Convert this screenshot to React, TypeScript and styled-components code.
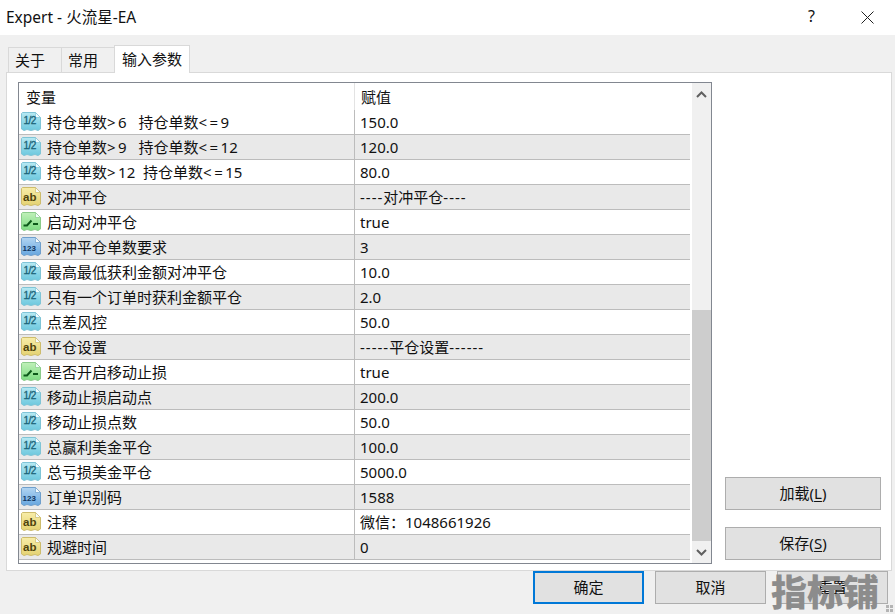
import { createGlobalStyle, styled } from "styled-components";

const GlobalStyle = createGlobalStyle`
  html, body {
    margin: 0;
    padding: 0;
    background: #f0f0f0;
    overflow: hidden;
  }
  * {
    box-sizing: border-box;
  }
`;

const Dialog = styled.div`
  position: relative;
  display: flex;
  flex-direction: column;
  width: 895px;
  height: 614px;
  background: #f0f0f0;
  color: #111;
  font-family: "Noto Sans", "Noto Sans CJK SC", sans-serif;
  font-size: 15px;
  overflow: hidden;
`;

const TitleBar = styled.div`
  display: flex;
  align-items: center;
  height: 35px;
  padding: 0 21px 0 6px;
  background: #fff;
  font-size: 15.5px;
`;

const Title = styled.div`
  flex: 1;
  margin-top: -3px;
`;

const HelpMark = styled.div`
  width: 53px;
  font-size: 16px;
  margin-top: -4px;
`;

const TabRow = styled.div`
  display: flex;
  align-items: flex-end;
  height: 37px;
  padding-left: 8px;
`;

const Tab = styled.div<{ $active?: boolean }>`
  display: flex;
  align-items: center;
  height: ${(p) => (p.$active ? 28 : 25)}px;
  width: ${(p) => (p.$active ? 76 : 54)}px;
  padding: 0 0 2px ${(p) => (p.$active ? 7 : 6)}px;
  background: ${(p) => (p.$active ? "#fff" : "#f0f0f0")};
  border: 1px solid #d9d9d9;
  border-bottom: none;
  margin-right: -1px;
  margin-bottom: ${(p) => (p.$active ? -1 : 0)}px;
  z-index: ${(p) => (p.$active ? 2 : 1)};
  position: relative;
`;

const Panel = styled.div`
  display: flex;
  margin-left: 6px;
  width: 886px;
  height: 499px;
  padding: 9px 9px 7px 11px;
  background: #fff;
  border: 1px solid #d9d9d9;
`;

const List = styled.div`
  display: flex;
  width: 694px;
  height: 482px;
  border: 1px solid #828790;
`;

const Grid = styled.div`
  flex: 1;
  min-width: 0;
  background: #fff;
`;

const HeaderRow = styled.div`
  display: grid;
  grid-template-columns: 336px 1fr;
  height: 27px;
  align-items: center;
`;

const HeaderCell = styled.div<{ $divided?: boolean }>`
  height: 100%;
  display: flex;
  align-items: center;
  padding-left: ${(p) => (p.$divided ? 7 : 6)}px;
  border-right: ${(p) => (p.$divided ? "1px solid #e3e3e3" : "none")};
`;

const Row = styled.div<{ $shaded: boolean }>`
  display: grid;
  grid-template-columns: 336px 1fr;
  height: 25px;
  background: ${(p) => (p.$shaded ? "#e9e9e9" : "#fff")};
  border-bottom: 1px solid #bcbcbc;
`;

const NameCell = styled.div`
  display: flex;
  align-items: center;
  gap: 5px;
  padding-left: 1px;
  border-right: 1px solid #bcbcbc;
  white-space: pre;
`;

const NameText = styled.span`
  margin-top: -2px;
`;

// signs and dashes are set wider than the font draws them
const Sign = styled.span<{ $spacing: number }>`
  letter-spacing: ${(p) => p.$spacing}px;
`;

const ValueCell = styled.div`
  display: flex;
  align-items: center;
  padding: 0 0 1px 5px;
  white-space: pre;
`;

const ScrollBar = styled.div`
  display: flex;
  flex-direction: column;
  width: 21px;
  background: #f0f0f0;
  border-left: 2px solid #fff;
`;

const ScrollArrow = styled.div`
  display: flex;
  align-items: center;
  justify-content: center;
  height: 22px;
`;

const ScrollSpace = styled.div`
  height: 205px;
`;

const ScrollThumb = styled.div`
  flex: 1;
  background: #cdcdcd;
`;

const SideColumn = styled.div`
  display: flex;
  flex-direction: column;
  justify-content: flex-end;
  gap: 17px;
  margin-left: 13px;
  padding-bottom: 3px;
`;

const Button = styled.div<{ $wide?: boolean; $primary?: boolean }>`
  display: flex;
  align-items: center;
  justify-content: center;
  width: ${(p) => (p.$wide ? 156 : 111)}px;
  height: 33px;
  padding-bottom: 2px;
  background: #e1e1e1;
  border: ${(p) => (p.$primary ? "2px solid #0078d7" : "1px solid #adadad")};
  white-space: pre;
`;

const Underlined = styled.span`
  text-decoration: underline;
  text-underline-offset: 2px;
  text-decoration-thickness: 1px;
`;

const Footer = styled.div`
  display: flex;
  justify-content: flex-end;
  gap: 11px;
  padding-right: 7px;
`;

const Watermark = styled.div`
  position: absolute;
  left: 771px;
  top: 566px;
  font-family: "Noto Sans CJK SC", sans-serif;
  font-size: 36px;
  font-weight: 900;
  line-height: 48px;
  color: #8c8c8c;
  white-space: nowrap;
`;

const Grip = styled.svg`
  position: absolute;
  right: 2px;
  bottom: 2px;
`;

type Kind = "half" | "text" | "bool" | "num";

const iconColors: Record<Kind, { top: string; bottom: string; edge: string; ink: string }> = {
  half: { top: "#b6e9f3", bottom: "#6cc8de", edge: "#7fc4d6", ink: "#1b6478" },
  text: { top: "#f8eda8", bottom: "#e4d272", edge: "#cdbc6c", ink: "#4d430d" },
  bool: { top: "#bff0b8", bottom: "#7cdc82", edge: "#8acb8a", ink: "#0d5a1a" },
  num: { top: "#b2d5f2", bottom: "#66a6df", edge: "#6f9fcc", ink: "#10365e" },
};

function ParamIcon({ kind }: { kind: Kind }) {
  const c = iconColors[kind];
  const id = `icon-${kind}`;
  return (
    <svg width="22" height="22" viewBox="0 0 22 22">
      <defs>
        <linearGradient id={id} x1="0" y1="0" x2="0" y2="1">
          <stop offset="0" stopColor={c.top} />
          <stop offset="1" stopColor={c.bottom} />
        </linearGradient>
      </defs>
      <path
        d="M2.5 1.5H15.5L20.5 6.5V18L18 19.5L15 18.5L11 19.5L7 18.5L4 19.5L1.5 18V2.5Z"
        fill={`url(#${id})`}
        stroke={c.edge}
      />
      <path d="M15.5 1.5V6.5H20.5Z" fill="#f4fbfd" stroke={c.edge} strokeWidth="0.7" />
      {kind === "half" && (
        <text x="3.5" y="13" fontSize="10" fontFamily="Liberation Sans" fill={c.ink} stroke={c.ink} strokeWidth="0.3" letterSpacing="-0.6">
          1/2
        </text>
      )}
      {kind === "text" && (
        <text x="3" y="14.5" fontSize="11.5" fontWeight="700" fontFamily="Liberation Sans" fill={c.ink}>
          ab
        </text>
      )}
      {kind === "num" && (
        <text x="2.5" y="14.5" fontSize="8" fontWeight="700" fontFamily="Liberation Sans" fill={c.ink}>
          123
        </text>
      )}
      {kind === "bool" && (
        <path d="M3.5 14.5H7L11.5 9.5M13 13H18" fill="none" stroke={c.ink} strokeWidth="2" />
      )}
    </svg>
  );
}

function Spaced({ text, match, spacing }: { text: string; match: RegExp; spacing: number }) {
  return (
    <>
      {text.split(match).map((part, i) =>
        i % 2 === 1 ? (
          <Sign key={i} $spacing={spacing}>
            {part}
          </Sign>
        ) : (
          part
        )
      )}
    </>
  );
}

const params: { kind: Kind; name: string; value: string }[] = [
  { kind: "half", name: "持仓单数>6   持仓单数<=9", value: "150.0" },
  { kind: "half", name: "持仓单数>9   持仓单数<=12", value: "120.0" },
  { kind: "half", name: "持仓单数>12  持仓单数<=15", value: "80.0" },
  { kind: "text", name: "对冲平仓", value: "----对冲平仓----" },
  { kind: "bool", name: "启动对冲平仓", value: "true" },
  { kind: "num", name: "对冲平仓单数要求", value: "3" },
  { kind: "half", name: "最高最低获利金额对冲平仓", value: "10.0" },
  { kind: "half", name: "只有一个订单时获利金额平仓", value: "2.0" },
  { kind: "half", name: "点差风控", value: "50.0" },
  { kind: "text", name: "平仓设置", value: "-----平仓设置------" },
  { kind: "bool", name: "是否开启移动止损", value: "true" },
  { kind: "half", name: "移动止损启动点", value: "200.0" },
  { kind: "half", name: "移动止损点数", value: "50.0" },
  { kind: "half", name: "总赢利美金平仓", value: "100.0" },
  { kind: "half", name: "总亏损美金平仓", value: "5000.0" },
  { kind: "num", name: "订单识别码", value: "1588" },
  { kind: "text", name: "注释", value: "微信：1048661926" },
  { kind: "text", name: "规避时间", value: "0" },
];

export default function App() {
  return (
    <Dialog>
      <GlobalStyle />
      <TitleBar>
        <Title>Expert - 火流星-EA</Title>
        <HelpMark>?</HelpMark>
        <svg width="13" height="13" viewBox="0 0 13 13">
          <path d="M0.5 0.5L12.5 12.5M12.5 0.5L0.5 12.5" stroke="#222" fill="none" />
        </svg>
      </TitleBar>
      <TabRow>
        <Tab>关于</Tab>
        <Tab>常用</Tab>
        <Tab $active>输入参数</Tab>
      </TabRow>
      <Panel>
        <List>
          <Grid>
            <HeaderRow>
              <HeaderCell $divided>变量</HeaderCell>
              <HeaderCell>赋值</HeaderCell>
            </HeaderRow>
            {params.map((p, i) => (
              <Row key={i} $shaded={i % 2 === 1}>
                <NameCell>
                  <ParamIcon kind={p.kind} />
                  <NameText>
                    <Spaced text={p.name} match={/([<>=]+)/} spacing={2.5} />
                  </NameText>
                </NameCell>
                <ValueCell>
                  <span>
                    <Spaced text={p.value} match={/(-+)/} spacing={1} />
                  </span>
                </ValueCell>
              </Row>
            ))}
          </Grid>
          <ScrollBar>
            <ScrollArrow>
              <svg width="11" height="7" viewBox="0 0 11 7">
                <path d="M1 6L5.5 1.5L10 6" fill="none" stroke="#606060" strokeWidth="2" />
              </svg>
            </ScrollArrow>
            <ScrollSpace />
            <ScrollThumb />
            <ScrollArrow>
              <svg width="11" height="7" viewBox="0 0 11 7">
                <path d="M1 1L5.5 5.5L10 1" fill="none" stroke="#606060" strokeWidth="2" />
              </svg>
            </ScrollArrow>
          </ScrollBar>
        </List>
        <SideColumn>
          <Button $wide>
            <span>
              加载(<Underlined>L</Underlined>)
            </span>
          </Button>
          <Button $wide>
            <span>
              保存(<Underlined>S</Underlined>)
            </span>
          </Button>
        </SideColumn>
      </Panel>
      <Footer>
        <Button $primary>确定</Button>
        <Button>取消</Button>
        <Button>重置</Button>
      </Footer>
      <Watermark>指标铺</Watermark>
      <Grip width="7" height="7" viewBox="0 0 7 7">
        <path d="M0 0h3v3H0zM4 0h3v3H4zM0 4h3v3H0zM4 4h3v3H4z" fill="#b4b4b4" />
      </Grip>
    </Dialog>
  );
}
